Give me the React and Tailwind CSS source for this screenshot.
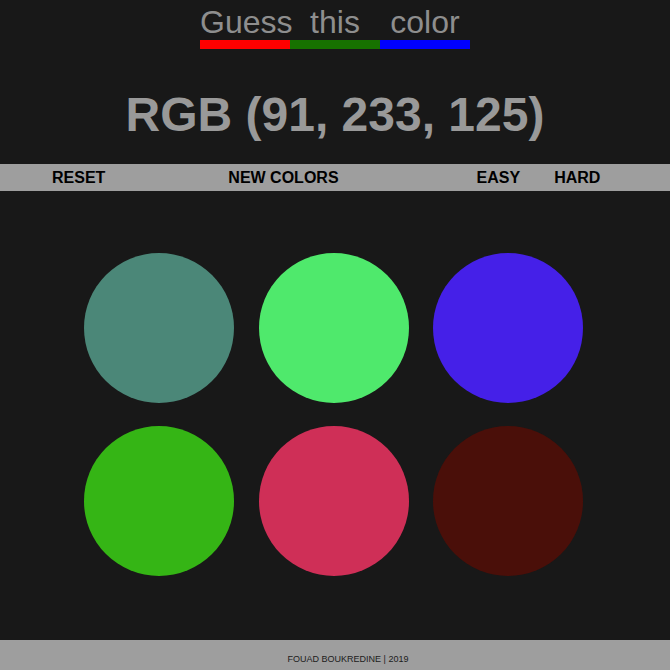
const words = [
  { text: "Guess", bar: "border-[#ff0000]" },
  { text: "this", bar: "border-[#177200]" },
  { text: "color", bar: "border-[#0000ff]" },
];

const circles = ["#4b8778", "#4fe96c", "#4520e8", "#35b515", "#cf2f57", "#4a0f09"];

const App = () => {
  return (
    <div className="bg-[#181818] min-h-screen w-full flex flex-col font-['Liberation_Sans',Arial,sans-serif]">
      {/* title */}
      <div className="flex justify-center pt-1">
        {words.map(w => (
          <div key={w.text} className={`w-[90px] text-center text-[32px] leading-[36px] text-[#8e8e8e] border-b-[9px] ${w.bar}`}>
            {w.text}
          </div>
        ))}
      </div>

      <h1 className="mt-[42px] text-center text-[48px] leading-[48px] font-bold text-[#999999]">
        RGB (91, 233, 125)
      </h1>

      {/* nav */}
      <div className="mt-[25px] h-[27px] bg-[#9e9e9e] flex items-center text-[16px] font-bold text-black">
        <button className="ml-[52px]">RESET</button>
        <button className="ml-[123px]">NEW COLORS</button>
        <button className="ml-[138px]">EASY</button>
        <button className="ml-[34px]">HARD</button>
      </div>

      {/* squares */}
      <div className="mt-[62px] mb-[64px] pl-[84px] grid grid-cols-[150px_150px_150px] gap-x-[24.5px] gap-y-[23px]">
        {circles.map(c => (
          <div key={c} className="w-[150px] h-[150px] rounded-full" style={{ backgroundColor: c }} />
        ))}
      </div>

      <footer className="h-[40px] bg-[#9e9e9e] flex items-center justify-center pl-[26px] text-[9px] text-[#1c1c1c]">
        FOUAD BOUKREDINE | 2019
      </footer>
    </div>
  );
};

export default App;
